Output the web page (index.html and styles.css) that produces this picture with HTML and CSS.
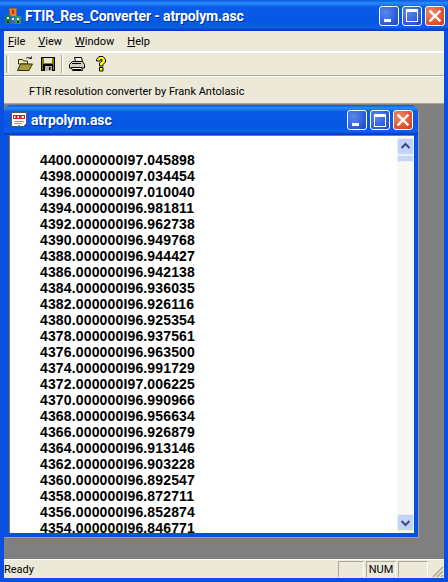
FILE: index.html
```html
<!DOCTYPE html>
<html lang="en">
  <head>
    <meta charset="UTF-8" />
    <title>FTIR_Res_Converter</title>
    <link rel="stylesheet" href="styles.css">
  </head>
  <body>
    <div class="window">
      <div class="titlebar">
        <svg class="app-icon" viewBox="0 0 16 16">
          <path fill="#8a6a30" d="M4 0h8v8H4z" />
          <path fill="#e8841c" d="M5 1h6v7H5z" />
          <path fill="#c8281c" d="M7 2h2v4H7z" />
          <path fill="#1f7a5a" d="M0 7h6v9H0z" />
          <path fill="#3f68c8" d="M6 8h4v8H6z" />
          <path fill="#2f9a68" d="M10 8h6v8h-6z" />
          <path fill="#e8f0e0" d="M2 9h2v2H2zM7 10h2v2H7zM12 10h2v2h-2z" />
          <path fill="#103020" d="M2 13h2v2H2zM12 13h2v2h-2z" />
        </svg>
        <span class="title-text">FTIR_Res_Converter - atrpolym.asc</span>
        <div class="caption-buttons">
          <button class="cap min"><i></i></button>
          <button class="cap max"><i></i></button>
          <button class="cap close">
            <svg viewBox="0 0 13 13"><path d="M1.5 1.5l10 10M11.5 1.5l-10 10" /></svg>
          </button>
        </div>
      </div>
      <div class="inner">
        <div class="menubar">
          <span><u>F</u>ile</span>
          <span><u>V</u>iew</span>
          <span><u>W</u>indow</span>
          <span><u>H</u>elp</span>
        </div>
        <div class="toolbar">
          <div class="grip"></div>
          <svg class="tool" viewBox="0 0 16 16">
            <path fill="#f0e8b0" stroke="#303010" d="M1.500 3.500h4l1 1.500h4v3h-9z" />
            <path fill="#a89a38" stroke="#303010" d="M.5 14.500l3-6.500h12l-3.500 6.500z" />
            <path fill="none" stroke="#404030" d="M9 2.500c1-1.500 3-1.500 4 0" />
            <path fill="#404030" d="M11 3h4V0z" />
          </svg>
          <svg class="tool" viewBox="0 0 16 16">
            <path fill="#000" d="M1 1h14v14H1z" />
            <path fill="#808000" d="M2 2h12v12H2z" />
            <path fill="#e8e8d8" d="M4 2h8v5H4z" />
            <path fill="#000" d="M3 8h10v7H3z" />
            <path fill="#b8b8a8" d="M5 10h7v5H5z" />
            <path fill="#000" d="M9 11h1.500v3H9z" />
          </svg>
          <div class="sep"></div>
          <svg class="tool" viewBox="0 0 16 16">
            <path fill="#f4f4ec" stroke="#000" d="M5.500 1.500h7l1 4h-7z" />
            <path fill="#d0d0c4" stroke="#000" d="M.5 8.500l3-3h10l2 3v3.500h-15z" />
            <path fill="#000" d="M3 7h9v1H3z" />
            <path fill="#fff" stroke="#000" d="M2.500 11.500h10l1 3h-10z" />
            <path fill="#000" d="M4 13h8v1H4z" />
            <path fill="#e8d020" d="M12 6.500h2v1h-2z" />
          </svg>
          <svg class="tool help" viewBox="0 0 16 16">
            <path fill="#ff0" stroke="#000" d="M3.500 3.500L6 .5h4l2.500 3v2.500l-2.500 2.500v1.500H6.500V7l2.500-2V3.500H7.500L7 5H3.500z" />
            <path fill="#ff0" stroke="#000" d="M6.500 11.500h3.500v3.500H6.500z" />
          </svg>
        </div>
        <div class="dialogbar">FTIR resolution converter by Frank Antolasic</div>
        <div class="mdi">
          <div class="child">
            <div class="child-title">
              <svg class="doc-icon" viewBox="0 0 16 16">
                <path fill="#fff" stroke="#555" d="M.5.500h15v11l-3 3h-3l-1-1-2 1h-6z" />
                <path fill="#d02020" d="M2 3h12v4H2z" />
                <path fill="#fff" d="M3 4h1.500v2H3zM6.500 4H8v2H6.500zM10.500 4H13v2h-2.500z" />
                <path fill="#999" d="M3 9h10v1H3zM3 11h8v1H3z" />
              </svg>
              <span class="child-text">atrpolym.asc</span>
              <div class="caption-buttons">
                <button class="cap min"><i></i></button>
                <button class="cap max"><i></i></button>
                <button class="cap close">
                  <svg viewBox="0 0 13 13"><path d="M1.5 1.5l10 10M11.5 1.5l-10 10" /></svg>
                </button>
              </div>
            </div>
            <div class="client">
              <pre class="data">4400.000000I97.045898
4398.000000I97.034454
4396.000000I97.010040
4394.000000I96.981811
4392.000000I96.962738
4390.000000I96.949768
4388.000000I96.944427
4386.000000I96.942138
4384.000000I96.936035
4382.000000I96.926116
4380.000000I96.925354
4378.000000I96.937561
4376.000000I96.963500
4374.000000I96.991729
4372.000000I97.006225
4370.000000I96.990966
4368.000000I96.956634
4366.000000I96.926879
4364.000000I96.913146
4362.000000I96.903228
4360.000000I96.892547
4358.000000I96.872711
4356.000000I96.852874
4354.000000I96.846771</pre>
              <div class="scrollbar">
                <div class="sb-btn">
                  <svg viewBox="0 0 15 15"><path d="M3.500 9l4-4 4 4" /></svg>
                </div>
                <div class="sb-thumb"></div>
                <div class="sb-track"></div>
                <div class="sb-btn">
                  <svg viewBox="0 0 15 15"><path d="M3.500 6l4 4 4-4" /></svg>
                </div>
              </div>
            </div>
          </div>
        </div>
        <div class="statusbar">
          <span class="status-text">Ready</span>
          <span class="pane"></span>
          <span class="pane">NUM</span>
          <span class="pane"></span>
          <svg class="sizer" viewBox="0 0 14 14">
            <path d="M13 3L3 13M13 7l-6 6M13 11l-2 2" />
          </svg>
        </div>
      </div>
    </div>
  </body>
</html>
```

FILE: styles.css
```css
html,
body {
  width: 100%;
  height: 100%;
}

body {
  margin: 0;
  overflow: hidden;
  font-family: Roboto, "Liberation Sans", sans-serif;
  font-size: 11px;
  color: #000;
}

/* Main window */

.window {
  width: 448px;
  height: 582px;
  box-sizing: border-box;
  display: flex;
  flex-direction: column;
  background: #0a50e0;
  padding: 0 4px 4px 4px;
}

.titlebar {
  height: 31px;
  margin: 0 -4px;
  padding: 0 3px 0 5px;
  flex: none;
  display: flex;
  align-items: center;
  background: linear-gradient(to bottom, #0a58e0 0%, #2a8cf5 10%, #0a5ce8 22%, #0757e2 70%, #0a60ec 88%, #0038c0 100%);
}

.app-icon {
  width: 16px;
  height: 16px;
  margin-right: 4px;
  flex: none;
}

.title-text {
  flex: 1;
  font-size: 14px;
  font-weight: bold;
  color: #fff;
  letter-spacing: -0.12px;
  text-shadow: 1px 1px 0 #0030a0;
  white-space: nowrap;
}

.caption-buttons {
  display: flex;
  gap: 3px;
  flex: none;
}

.cap {
  width: 20px;
  height: 20px;
  padding: 0;
  border: 1px solid #fff;
  border-radius: 3px;
  background: radial-gradient(circle at 30% 30%, #5c88ec, #2a58d8 70%, #1c44c0);
  display: flex;
  align-items: center;
  justify-content: center;
  position: relative;
}

.cap.min i {
  display: block;
  width: 7px;
  height: 3px;
  background: #fff;
  position: absolute;
  left: 4px;
  bottom: 3px;
}

.cap.max i {
  display: block;
  width: 10px;
  height: 9px;
  border: 1px solid #fff;
  border-top-width: 3px;
}

.cap.close {
  background: radial-gradient(circle at 30% 30%, #ee8a68, #e0542c 65%, #c43c18);
}

.cap.close svg {
  width: 14px;
  height: 14px;
}

.cap.close path {
  fill: none;
  stroke: #fff;
  stroke-width: 2;
}

.inner {
  flex: 1;
  min-height: 0;
  display: flex;
  flex-direction: column;
  background: #ece9d8;
}

/* Bars */

.menubar {
  height: 20px;
  flex: none;
  display: flex;
  align-items: center;
  gap: 13px;
  padding-left: 4px;
  border-bottom: 1px solid #fff;
}

.toolbar {
  height: 22px;
  flex: none;
  display: flex;
  align-items: center;
  padding-left: 2px;
  border-top: 1px solid #ffffff;
  border-bottom: 1px solid #aca899;
}

.grip {
  width: 1px;
  height: 18px;
  margin-right: 8px;
  border-left: 1px solid #aca899;
  border-right: 1px solid #fff;
}

.tool {
  width: 16px;
  height: 16px;
  margin-right: 7px;
  flex: none;
}

.tool.help {
  margin-left: 1px;
}

.sep {
  width: 1px;
  height: 18px;
  margin: 0 6px 0 -2px;
  background: #aca899;
  border-right: 1px solid #fff;
}

.dialogbar {
  height: 28px;
  flex: none;
  box-sizing: border-box;
  display: flex;
  align-items: center;
  padding: 2px 0 0 25px;
  border-top: 1px solid #fff;
  border-bottom: 1px solid #aca899;
}

/* MDI area */

.mdi {
  flex: 1;
  min-height: 0;
  background: #808080;
  padding: 1px 26px 0 0;
}

.child {
  height: 432px;
  box-sizing: border-box;
  display: flex;
  flex-direction: column;
  background: #0a50e0;
  border-radius: 8px 8px 0 0;
  padding: 0 4px 4px 5px;
  box-shadow: 1px 1px 0 #a0a090;
}

.child-title {
  height: 30px;
  flex: none;
  margin: 0 -4px 0 -5px;
  padding: 0 5px 0 7px;
  display: flex;
  align-items: center;
  border-radius: 8px 8px 0 0;
  background: linear-gradient(to bottom, #0a58e0 0%, #2a8cf5 10%, #0a5ce8 22%, #0757e2 70%, #0a60ec 88%, #0038c0 100%);
}

.doc-icon {
  width: 16px;
  height: 16px;
  margin-right: 4px;
  flex: none;
}

.child-text {
  flex: 1;
  font-size: 14px;
  font-weight: bold;
  color: #fff;
  letter-spacing: -0.12px;
  text-shadow: 1px 1px 0 #0030a0;
}

.client {
  flex: 1;
  min-height: 0;
  display: flex;
  background: #fff;
  border-top: 1px solid #808070;
  border-left: 1px solid #808070;
  overflow: hidden;
}

.data {
  flex: 1;
  margin: 0;
  padding: 16px 0 0 30px;
  font-family: "Liberation Sans", Arial, sans-serif;
  font-size: 14px;
  font-weight: bold;
  line-height: 16px;
  letter-spacing: 0.15px;
  overflow: hidden;
}

/* Scrollbar */

.scrollbar {
  width: 17px;
  flex: none;
  display: flex;
  flex-direction: column;
  padding: 2px 0 2px;
  box-sizing: border-box;
  background: #f8f8f2;
}

.sb-btn {
  height: 17px;
  flex: none;
  background: #c4d4f8;
  border: 1px solid #e8eefc;
  box-sizing: border-box;
  border-radius: 2px;
}

.sb-btn svg {
  display: block;
  width: 15px;
  height: 15px;
}

.sb-btn path {
  fill: none;
  stroke: #3a4d80;
  stroke-width: 2;
}

.sb-thumb {
  height: 7px;
  flex: none;
  background: #c8d6f8;
  border: 1px solid #e8eefc;
  box-sizing: border-box;
}

.sb-track {
  flex: 1;
}

/* Status bar */

.statusbar {
  height: 18px;
  flex: none;
  display: flex;
  align-items: center;
  gap: 2px;
  border-top: 1px solid #fff;
}

.status-text {
  flex: 1;
}

.pane {
  width: 26px;
  height: 16px;
  line-height: 16px;
  text-align: center;
  border-left: 1px solid #aca899;
  border-top: 1px solid #aca899;
  border-right: 1px solid #fff;
  box-sizing: border-box;
}

.pane:nth-of-type(3),
.pane:nth-of-type(4) {
  width: 30px;
}

.sizer {
  width: 14px;
  height: 14px;
  margin-top: 3px;
  flex: none;
}

.sizer path {
  fill: none;
  stroke: #aca899;
  stroke-width: 1.5;
}
```
